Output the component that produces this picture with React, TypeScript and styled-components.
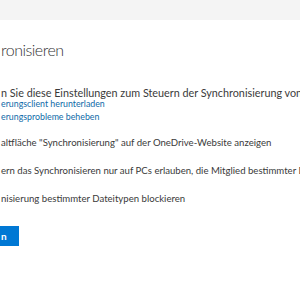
import styled, { createGlobalStyle } from "styled-components";

const GlobalStyle = createGlobalStyle`
  html, body {
    margin: 0;
    padding: 0;
    background: #ffffff;
    overflow: hidden;
  }
  body {
    font-family: Lato, "Open Sans", sans-serif;
    color: #333333;
  }
`;

// the screenshot is a crop of a wider page: the start of each line sits left of the view
const checkboxes = [
  { cut: "Sch", rest: "altfläche \"Synchronisierung\" auf der OneDrive-Website anzeigen" },
  {
    cut: "Benutz",
    rest: "ern das Synchronisieren nur auf PCs erlauben, die Mitglied bestimmter Domänen sind",
  },
  { cut: "Synchro", rest: "nisierung bestimmter Dateitypen blockieren" },
];

export default function App() {
  return (
    <>
      <GlobalStyle />
      <Page>
        <TopBar />
        <Content>
          <Title>
            <Hidden>Synch</Hidden>ronisieren
          </Title>
          <Intro>
            <Hidden>Verwende</Hidden>n Sie diese Einstellungen zum Steuern der Synchronisierung
            von Dateien in OneDrive und SharePoint.
          </Intro>
          <Links>
            <Link href="#">
              <Hidden>Synchronisi</Hidden>erungsclient herunterladen
            </Link>
            <Link href="#">
              <Hidden>Synchronisi</Hidden>erungsprobleme beheben
            </Link>
          </Links>
          <Options>
            {checkboxes.map((c) => (
              <Option key={c.cut}>
                <Hidden>
                  <Box type="checkbox" />
                  {c.cut}
                </Hidden>
                {c.rest}
              </Option>
            ))}
          </Options>
          <Actions>
            <SaveButton>
              <Hidden>Speicher</Hidden>n
            </SaveButton>
          </Actions>
        </Content>
      </Page>
    </>
  );
}

const Page = styled.div`
  width: 300px;
  height: 300px;
  overflow: hidden;
  display: flex;
  flex-direction: column;
`;

const TopBar = styled.div`
  height: 20px;
  flex: none;
  background: #f4f4f4;
`;

const Content = styled.div`
  display: flex;
  flex-direction: column;
  align-items: flex-start;
  flex: none;
  white-space: nowrap;
  padding-left: 1px;
`;

const Hidden = styled.span`
  display: flex;
  align-items: center;
  justify-content: flex-end;
  gap: 8px;
  flex: none;
  width: 140px;
  margin: 0 1px 0 -141px;
  overflow: hidden;
`;

const Line = styled.div`
  display: flex;
  align-items: center;
  flex: none;
`;

const Title = styled(Line)`
  margin-top: 17px;
  height: 24px;
  font-size: 16px;
  letter-spacing: -0.5px;
  font-weight: 300;
  color: #333333;
`;

const Intro = styled(Line)`
  margin-top: 25px;
  height: 12px;
  font-size: 10.8px;
  color: #3a3a3a;
`;

const Links = styled.div`
  display: flex;
  flex-direction: column;
  flex: none;
  margin-top: -1px;
`;

const Link = styled.a`
  display: flex;
  align-items: center;
  height: 13px;
  font-size: 8.8px;
  color: #0f6aa8;
  text-decoration: none;
`;

const Options = styled.div`
  display: flex;
  flex-direction: column;
  flex: none;
  gap: 14px;
  margin-top: 12px;
`;

const Option = styled.label`
  display: flex;
  align-items: center;
  height: 14px;
  font-size: 9.6px;
  color: #3a3a3a;
`;

const Box = styled.input`
  margin: 0;
  width: 11px;
  height: 11px;
`;

const Actions = styled.div`
  display: flex;
  flex: none;
  padding-top: 21px;
  margin-left: -1px;
`;

const SaveButton = styled.button`
  display: flex;
  align-items: center;
  height: 20px;
  padding: 0 12px 0 1px;
  border: none;
  background: #0078d4;
  color: #ffffff;
  font-family: Lato, "Open Sans", sans-serif;
  font-size: 10px;
  font-weight: 700;
`;
